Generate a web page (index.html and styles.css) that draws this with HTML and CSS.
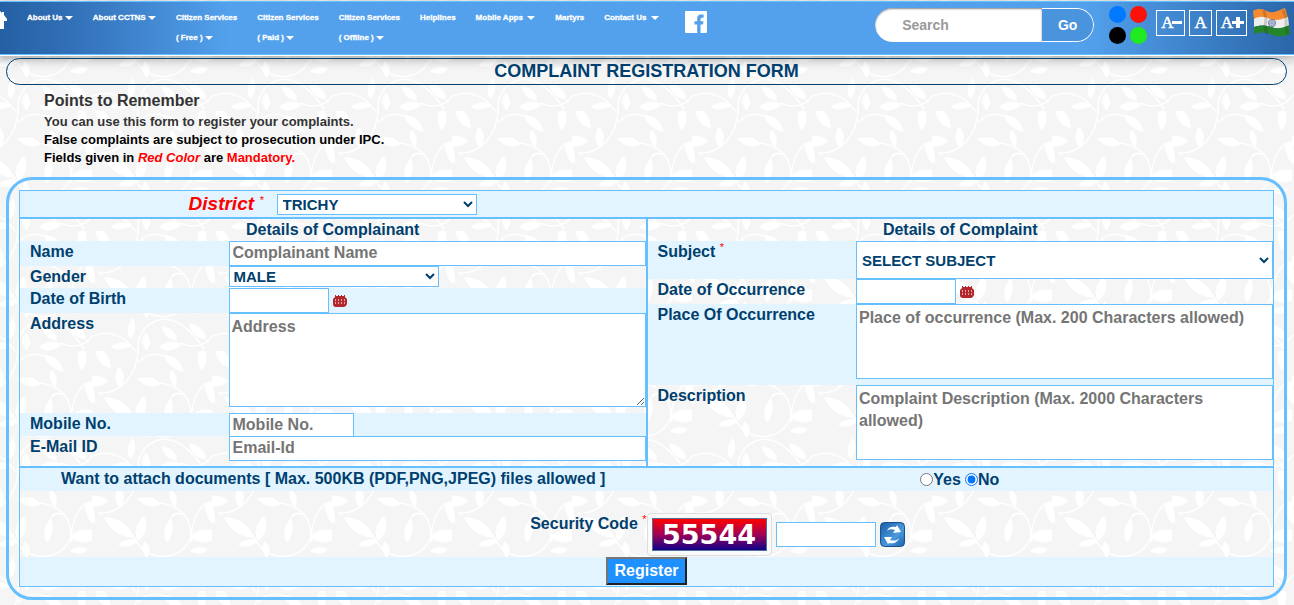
FILE: index.html
```html
<!DOCTYPE html>
<html lang="en">
<head>
    <meta charset="UTF-8">
    <meta name="viewport" content="width=device-width, initial-scale=1.0">
    <title>Complaint Registration Form</title>
    <link rel="stylesheet" href="styles.css">
</head>
<body>
    <header class="top-bar">
        <a href="#" class="home" aria-label="Home">
            <svg width="7" height="20" viewBox="0 0 7 20"><path d="M0 1 2 3V2h2v3l3 4v2H4v8H0z" fill="#fff"/></svg>
        </a>
        <nav class="menu">
            <a href="#">About Us <i class="caret"></i></a>
            <a href="#">About CCTNS <i class="caret"></i></a>
            <a href="#">Citizen Services<br>( Free ) <i class="caret"></i></a>
            <a href="#">Citizen Services<br>( Paid ) <i class="caret"></i></a>
            <a href="#">Citizen Services<br>( Offline ) <i class="caret"></i></a>
            <a href="#">Helplines</a>
            <a href="#">Mobile Apps &nbsp;<i class="caret"></i></a>
            <a href="#">Martyrs</a>
            <a href="#">Contact Us &nbsp;<i class="caret"></i></a>
        </nav>
        <a href="#" class="facebook" aria-label="Facebook">
            <svg width="22" height="22" viewBox="0 0 22 22"><path d="M1 0h20a1 1 0 0 1 1 1v20a1 1 0 0 1-1 1h-5.500v-8.500h2.500l.5-3.200h-3V8.300c0-1 .4-1.600 1.600-1.600h1.500V3.500h-2.500c-2.600 0-3.900 1.500-3.900 4v2.800H9.500v3.200h2.700V22H1a1 1 0 0 1-1-1V1a1 1 0 0 1 1-1z" fill="#fff"/></svg>
        </a>
        <div class="tools">
            <form class="search">
                <input type="text" placeholder="Search" aria-label="Search">
                <button type="button">Go</button>
            </form>
            <div class="themes">
                <button type="button" class="dot blue" aria-label="Blue theme"></button>
                <button type="button" class="dot red" aria-label="Red theme"></button>
                <button type="button" class="dot black" aria-label="Black theme"></button>
                <button type="button" class="dot green" aria-label="Green theme"></button>
            </div>
            <div class="text-size">
                <button type="button" aria-label="Smaller text">A<svg width="10" height="12" viewBox="0 0 10 12"><path d="M0 4h10v3H0z" fill="#fff"/></svg></button>
                <button type="button" aria-label="Normal text">A</button>
                <button type="button" aria-label="Larger text">A<svg width="12" height="12" viewBox="0 0 12 12"><path d="M0 4h4V0h4v4h4v3H8v4H4V7H0z" fill="#fff"/></svg></button>
            </div>
            <svg class="flag" width="37" height="30" viewBox="0 0 37 30">
                <path d="M0 3c5-3 10-2 14 0 5 3 10 0 18-3l3 10c-8 3-12 4-18 2-6-3-11-3-16 0z" fill="#f58a2f"/>
                <path d="M1 11c5-3 10-3 16 0 6 2 10 1 18-2l1 9c-8 3-12 3-18 1-6-2-11-2-17 0z" fill="#eee"/>
                <path d="M1 19c6-2 11-2 17 0s10 2 18-2l1 9c-7 3-12 3-18 1-6-3-12-3-18-1z" fill="#25852b"/>
                <circle cx="19" cy="15" r="3.500" fill="#c9cede" stroke="#66769e"/>
                <path d="M19 12v6M16 15h6" stroke="#7083a8" stroke-width=".6"/>
                <path d="M11 2l2 9-1 8 2 7M30 2l3 8v9l2 7" fill="none" stroke="#222" stroke-opacity=".18" stroke-width="3"/>
            </svg>
        </div>
    </header>

    <h1 class="page-title">COMPLAINT REGISTRATION FORM</h1>

    <section class="points">
        <h2>Points to Remember</h2>
        <p class="intro">You can use this form to register your complaints.</p>
        <p>False complaints are subject to prosecution under IPC.</p>
        <p>Fields given in <em>Red Color</em> are <strong>Mandatory.</strong></p>
    </section>

    <form class="complaint-form">
        <div class="district-row box tint">
            <label for="district" class="district-label">District <sup>*</sup></label>
            <div class="district-field">
                <select id="district" class="district">
                    <option>TRICHY</option>
                </select>
            </div>
        </div>

        <div class="halves">
            <div class="half box">
                <h3>Details of Complainant</h3>
                <div class="row tint">
                    <label for="name">Name</label>
                    <div class="field"><input type="text" id="name" class="wide" placeholder="Complainant Name"></div>
                </div>
                <div class="row row-gender">
                    <label for="gender">Gender</label>
                    <div class="field">
                        <select id="gender" class="gender">
                            <option>MALE</option>
                            <option>FEMALE</option>
                        </select>
                    </div>
                </div>
                <div class="row tint">
                    <label for="dob">Date of Birth</label>
                    <div class="field">
                        <input type="text" id="dob" class="short">
                        <button type="button" class="calendar" aria-label="Pick date of birth">
                            <svg width="14" height="14" viewBox="0 0 14 14"><path d="M2 3V1h1v1h2V1h1v1h2V1h1v1h2V1h1v2l2 2v5q-1 3-3 3H3q-3 0-3-3V5z" fill="#b3262b"/><path d="M2 6h10M2 9h10" stroke="#e8a5a5" stroke-width="2" stroke-dasharray="1 2"/></svg>
                        </button>
                    </div>
                </div>
                <div class="row row-address">
                    <label for="address">Address</label>
                    <div class="field"><textarea id="address" class="address" placeholder="Address"></textarea></div>
                </div>
                <div class="row row-mobile tint">
                    <label for="mobile">Mobile No.</label>
                    <div class="field"><input type="text" id="mobile" class="mobile" placeholder="Mobile No."></div>
                </div>
                <div class="row">
                    <label for="email">E-Mail ID</label>
                    <div class="field"><input type="text" id="email" class="wide" placeholder="Email-Id"></div>
                </div>
            </div>

            <div class="half box">
                <h3>Details of Complaint</h3>
                <div class="row tint">
                    <label for="subject">Subject <sup>*</sup></label>
                    <div class="field">
                        <select id="subject" class="subject">
                            <option>SELECT SUBJECT</option>
                        </select>
                    </div>
                </div>
                <div class="row">
                    <label for="occurrence">Date of Occurrence</label>
                    <div class="field">
                        <input type="text" id="occurrence" class="short">
                        <button type="button" class="calendar" aria-label="Pick date of occurrence">
                            <svg width="14" height="14" viewBox="0 0 14 14"><path d="M2 3V1h1v1h2V1h1v1h2V1h1v1h2V1h1v2l2 2v5q-1 3-3 3H3q-3 0-3-3V5z" fill="#b3262b"/><path d="M2 6h10M2 9h10" stroke="#e8a5a5" stroke-width="2" stroke-dasharray="1 2"/></svg>
                        </button>
                    </div>
                </div>
                <div class="row row-text tint">
                    <label for="place">Place Of Occurrence</label>
                    <div class="field"><textarea id="place" class="fixed" placeholder="Place of occurrence (Max. 200 Characters allowed)"></textarea></div>
                </div>
                <div class="row row-text">
                    <label for="description">Description</label>
                    <div class="field"><textarea id="description" class="fixed" placeholder="Complaint Description (Max. 2000 Characters allowed)"></textarea></div>
                </div>
            </div>
        </div>

        <div class="box">
            <div class="attach tint">
                <span id="attachText">Want to attach documents [ Max. 500KB (PDF,PNG,JPEG) files allowed ]</span>
                <div class="choices" role="radiogroup" aria-labelledby="attachText">
                    <input type="radio" id="attachYes" name="attach"><label for="attachYes">Yes</label>
                    <input type="radio" id="attachNo" name="attach" checked><label for="attachNo">No</label>
                </div>
            </div>
            <div class="security">
                <label for="code">Security Code <sup>*</sup></label>
                <div class="captcha-line">
                    <div class="captcha"><span>55544</span></div>
                    <input type="text" id="code" class="short">
                    <button type="button" class="refresh" aria-label="New code">
                        <svg width="25" height="25" viewBox="0 0 25 25">
                            <defs>
                                <linearGradient id="refreshBlue" x1="0" y1="0" x2="1" y2="1">
                                    <stop offset="0" stop-color="#1b5fa8"/>
                                    <stop offset=".6" stop-color="#4b98dd"/>
                                    <stop offset="1" stop-color="#1c62ad"/>
                                </linearGradient>
                            </defs>
                            <rect x=".5" y=".5" width="24" height="24" rx="4" fill="url(#refreshBlue)" stroke="#184f8f"/>
                            <path d="M7 9c1-4 5-5 9-4l1-2 4 7-8 1 2-3c-3-1-6-1-8 1z" fill="#fff"/>
                            <path d="M19 16c-1 4-5 6-10 5l-1 1-4-7h8l-2 3c3 1 7 1 9-2z" fill="#fff"/>
                        </svg>
                    </button>
                </div>
            </div>
            <div class="submit-row tint">
                <button type="button" class="register">Register</button>
            </div>
        </div>
    </form>
</body>
</html>
```
FILE: styles.css
```css
* {
    box-sizing: border-box;
}
body {
    margin: 0;
    font-family: "Liberation Sans", Arial, sans-serif;
    font-size: 16px;
    font-weight: bold;
    line-height: 22px;
    color: #003f6e;
    background-color: #f5f5f5;
    /* leaf pattern, repeats every 120px */
    background-image: url("data:image/svg+xml,%3Csvg xmlns='http://www.w3.org/2000/svg' width='120' height='120'%3E%3Cg fill='none' stroke='%23fff' stroke-width='1.500'%3E%3Cpath d='M6 42C28 44 45 24 46 0M46 12Q58-3 80 8M66 32C90 34 99 48 99 66M99 72C99 45 110 31 120 31M79 48Q82 39 93 44M1 105C15 99 32 103 43 120M88 112C104 119 116 113 120 104M46 120C45 105 52 92 70 88C84 88 98 96 112 118M41 64C52 92 88 92 98 68'/%3E%3C/g%3E%3Cg fill='%23fff'%3E%3Cpath d='M45 28Q59 22 69 33Q57 40 45 28M0 25Q10 24 16 30Q9 37 0 35zM0 34Q3 42 3 52L0 52zM120 52Q113 45 113 33L120 32zM12 46Q35 47 42 67Q20 65 12 46M52 45Q59 58 46 70Q39 57 52 45M79 47Q84 60 75 72Q68 58 79 47M98 66Q108 56 120 59V69Q109 75 98 66M79 19Q88 26 83 36Q75 29 79 19M71 4Q88 4 92 21Q77 18 71 4M27 16Q36 26 28 37Q19 27 27 16M3 0H12Q19 8 19 17Q6 14 3 0M107 0H113Q117 10 110 20Q103 10 107 0M41 87Q47 98 38 108Q32 98 41 87M54 102Q62 110 55 120Q46 110 54 102M18 116Q28 108 40 114Q29 122 18 116M67 116Q78 107 90 113Q79 124 67 116M70 95Q84 98 85 110Q72 108 70 95M97 92Q113 96 114 108Q99 107 97 92M26 74Q36 65 46 70Q38 79 26 74M53 70Q61 78 55 87Q47 80 53 70M98 80Q108 73 116 78Q108 86 98 80'/%3E%3C/g%3E%3C/svg%3E");
    background-position: 92px 111px;
}
a {
    color: inherit;
    text-decoration: none;
}
button {
    font: inherit;
    cursor: pointer;
}
svg {
    display: block;
}

/* top bar */
.top-bar {
    display: flex;
    align-items: flex-start;
    height: 54px;
    margin-top: 1px;
    padding-right: 4px;
    color: #fff;
    background: linear-gradient(to right, #2560a3 0, #2f6db4 60px, #53a1ed 230px, #53a1ed calc(100% - 210px), #2a66a9 100%);
    border-top: 1px solid #66bfff;
    border-bottom: 1px solid #66bfff;
    box-shadow: 0 1px 0 #fff, 0 3px 10px 1px rgba(0, 0, 0, 0.35);
}
.home {
    margin: 8px 20px 0 0;
}
.menu {
    display: flex;
    gap: 20px;
    padding-top: 6px;
    font-size: 8px;
    line-height: 20px;
    white-space: nowrap;
    -webkit-text-stroke: 0.3px #fff;
}
.caret {
    display: inline-block;
    vertical-align: middle;
    border-top: 4px solid #fff;
    border-left: 4px solid transparent;
    border-right: 4px solid transparent;
}
.facebook {
    margin: 9px 0 0 26px;
}
.tools {
    display: flex;
    align-items: flex-start;
    margin-left: auto;
}
.search {
    display: flex;
    width: 219px;
    height: 34px;
    margin: 6px 15px 0 0;
    font-size: 14px;
    border-radius: 17px;
    overflow: hidden;
}
.search input {
    flex: 1;
    min-width: 0;
    padding: 0 0 0 27px;
    font: inherit;
    color: #555;
    background: #fff;
    border: none;
    border-radius: 17px 0 0 17px;
    box-shadow: inset 0 1px 2px #888;
}
.search input::placeholder {
    color: #999;
}
.search button {
    width: 52px;
    padding: 0;
    color: #fff;
    background: #4a94dd;
    border: 1px solid #fff;
    border-left: none;
    border-radius: 0 17px 17px 0;
}
.themes {
    display: grid;
    grid-template-columns: 17px 17px;
    gap: 4px;
    margin: 4px 9px 0 0;
}
.dot {
    height: 17px;
    padding: 0;
    border: none;
    border-radius: 50%;
}
.blue {
    background: #0078ff;
}
.red {
    background: #fe1108;
}
.black {
    background: #000;
}
.green {
    background: #1fe91f;
}
.text-size {
    display: flex;
    gap: 4px;
    margin: 8px 6px 0 0;
}
.text-size button {
    display: flex;
    align-items: center;
    justify-content: center;
    min-width: 22px;
    height: 26px;
    padding: 0 4px;
    font-family: "Liberation Serif", "Times New Roman", serif;
    font-size: 17px;
    font-weight: normal;
    color: #fff;
    background: none;
    border: 1px solid #fff;
    -webkit-text-stroke: 0.5px #fff;
}
.text-size svg {
    margin: 0 -2px 0 -1px;
}
.flag {
    margin-top: 6px;
}

/* heading and notes */
.page-title {
    margin: 3px 7px 0 6px;
    font-size: 18px;
    line-height: 25px;
    text-align: center;
    border: 1px solid #003f6e;
    border-radius: 14px;
}
.points {
    padding: 5px 44px 10px;
    font-size: 13px;
    line-height: 18px;
    color: #000;
}
.points h2 {
    margin: 0 0 1px;
    font-size: 16px;
    line-height: 22px;
    color: #333;
}
.points p {
    margin: 0;
}
.points .intro {
    color: #333;
}
.points em,
.points strong {
    color: #f00;
}

/* form */
.complaint-form {
    margin: 0 7px 0 6px;
    padding: 10px;
    border: 3px solid #66bfff;
    border-radius: 26px;
}
.box {
    border: 1px solid #66bfff;
}
.tint {
    background: #e1f4ff;
}
sup {
    font-size: 11px;
    font-weight: normal;
    line-height: 0;
    vertical-align: 6px;
    color: #f00;
}
.district-row {
    display: flex;
    align-items: center;
    height: 28px;
}
.district-label {
    width: 20%;
    padding-right: 7px;
    font-size: 19px;
    font-style: italic;
    text-align: right;
    color: #f00;
}
.district-field {
    display: flex;
    padding-left: 6px;
}
.halves {
    display: grid;
    grid-template-columns: 1fr 1fr;
}
.half h3 {
    margin: 0;
    font-size: 16px;
    line-height: 22px;
    text-align: center;
}
.row {
    display: grid;
    grid-template-columns: 1fr 2fr;
}
.row > label {
    padding-left: 10px;
}
.field {
    display: flex;
    align-items: flex-start;
    min-width: 0;
}
.complaint-form input[type="text"],
.complaint-form select,
.complaint-form textarea {
    margin: 0;
    font: inherit;
    color: #003f6e;
    background: #fff;
    border: 1px solid #66bfff;
    border-radius: 0;
}
.complaint-form input[type="text"] {
    height: 25px;
    padding: 0 3px 2px;
}
.complaint-form select {
    height: 21px;
    padding: 0 0 0 1px;
    font-size: 15px;
}
.complaint-form textarea {
    width: 100%;
    padding: 2px;
}
.complaint-form ::placeholder {
    color: #757575;
}
.wide {
    width: 100%;
}
.complaint-form .short {
    width: 100px;
}
.complaint-form .district {
    width: 200px;
}
.complaint-form .gender {
    width: 210px;
    padding-left: 0;
}
.complaint-form .subject {
    width: 100%;
    height: 38px;
}
.complaint-form .mobile {
    width: 125px;
    height: 23px;
    font-size: 15px;
}
.complaint-form .address {
    height: 94px;
}
.complaint-form .fixed {
    height: 75px;
    resize: none;
}
.row-gender {
    height: 22px;
}
.row-address {
    height: 100px;
}
.row-mobile {
    height: 23px;
}
.row-text {
    height: 81px;
}
.calendar {
    margin: 6px 0 0 4px;
    padding: 0;
    background: none;
    border: none;
}

/* attachments, security code and submit */
.attach {
    display: grid;
    grid-template-columns: 1fr 1fr;
    height: 23px;
    text-align: center;
}
.choices {
    display: flex;
    align-items: center;
    justify-content: center;
}
.choices input {
    width: 13px;
    height: 13px;
    margin: 0;
}
.choices label + input {
    margin-left: 4px;
}
.security {
    display: grid;
    grid-template-columns: 1fr 1fr;
    height: 66px;
    padding-top: 22px;
}
.security > label {
    text-align: right;
}
.captcha-line {
    display: flex;
    align-items: center;
    height: 42px;
    gap: 4px;
}
.captcha {
    padding: 4px;
    background: #fafafa;
    border: 1px solid #ddd;
    border-radius: 4px;
}
.captcha span {
    display: block;
    width: 115px;
    font-family: "DejaVu Sans", sans-serif;
    font-size: 27px;
    line-height: 31px;
    text-align: center;
    color: #fff;
    background: linear-gradient(#f00, #a00055 50%, #10008a);
    border: 1px solid #4d7296;
}
.refresh {
    padding: 0;
    background: none;
    border: none;
}
.submit-row {
    height: 29px;
    text-align: center;
}
.register {
    height: 28px;
    padding: 0 6px;
    color: #fff;
    background: #1e90ff;
    border: 2px solid;
    border-color: #767676 #212121 #212121 #767676;
}
```
